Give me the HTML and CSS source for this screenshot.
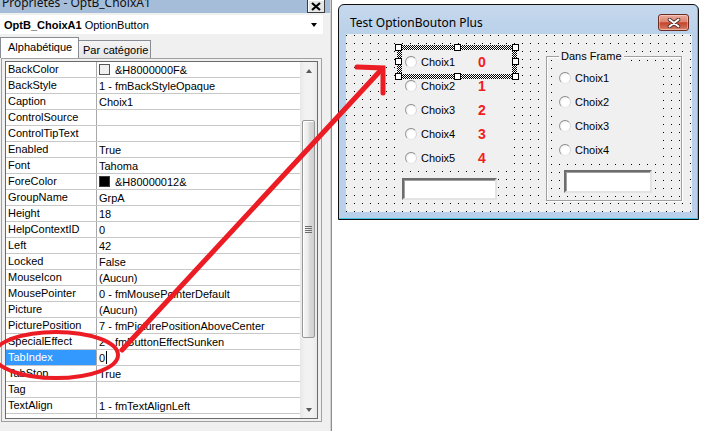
FILE: index.html
```html
<!DOCTYPE html>
<html lang="fr">
<head>
<meta charset="utf-8">
<title>Propriétés</title>
<link rel="stylesheet" href="styles.css">
</head>
<body>
<div class="screen">
  <section class="props">
    <header class="props-title">
      <span class="props-caption">Propriétés - OptB_ChoixA1</span>
      <span class="props-close"><svg width="10" height="9" viewBox="0 0 10 9"><path d="M1 1 L9 8 M9 1 L1 8" stroke="#000" stroke-width="2.2" fill="none"/></svg></span>
    </header>
    <div class="combo"><span class="combo-text"><b>OptB_ChoixA1</b> OptionButton</span><span class="combo-arrow"></span></div>
    <div class="tabs"><span class="tab tab-active">Alphabétique</span><span class="tab">Par catégorie</span></div>
    <div class="grid-outer">
      <div class="grid-inner">
        <div class="grid">
          <div class="row"><span class="name">BackColor</span><span class="val"><i class="swatch swatch-light"></i>&amp;H8000000F&amp;</span></div>
          <div class="row"><span class="name">BackStyle</span><span class="val">1 - fmBackStyleOpaque</span></div>
          <div class="row"><span class="name">Caption</span><span class="val">Choix1</span></div>
          <div class="row"><span class="name">ControlSource</span><span class="val"></span></div>
          <div class="row"><span class="name">ControlTipText</span><span class="val"></span></div>
          <div class="row"><span class="name">Enabled</span><span class="val">True</span></div>
          <div class="row"><span class="name">Font</span><span class="val">Tahoma</span></div>
          <div class="row"><span class="name">ForeColor</span><span class="val"><i class="swatch swatch-dark"></i>&amp;H80000012&amp;</span></div>
          <div class="row"><span class="name">GroupName</span><span class="val">GrpA</span></div>
          <div class="row"><span class="name">Height</span><span class="val">18</span></div>
          <div class="row"><span class="name">HelpContextID</span><span class="val">0</span></div>
          <div class="row"><span class="name">Left</span><span class="val">42</span></div>
          <div class="row"><span class="name">Locked</span><span class="val">False</span></div>
          <div class="row"><span class="name">MouseIcon</span><span class="val">(Aucun)</span></div>
          <div class="row"><span class="name">MousePointer</span><span class="val">0 - fmMousePointerDefault</span></div>
          <div class="row"><span class="name">Picture</span><span class="val">(Aucun)</span></div>
          <div class="row"><span class="name">PicturePosition</span><span class="val">7 - fmPicturePositionAboveCenter</span></div>
          <div class="row"><span class="name">SpecialEffect</span><span class="val">2 - fmButtonEffectSunken</span></div>
          <div class="row row-sel"><span class="name">TabIndex</span><span class="val">0<i class="caret"></i></span></div>
          <div class="row"><span class="name">TabStop</span><span class="val">True</span></div>
          <div class="row"><span class="name">Tag</span><span class="val"></span></div>
          <div class="row"><span class="name">TextAlign</span><span class="val">1 - fmTextAlignLeft</span></div>
          <div class="row"><span class="name"></span><span class="val"></span></div>
        </div>
        <div class="vscroll">
          <div class="sb-btn"><i class="sb-up"></i></div>
          <div class="sb-track"><div class="sb-thumb"><i class="grip"></i></div></div>
          <div class="sb-btn"><i class="sb-down"></i></div>
        </div>
      </div>
    </div>
  </section>

  <div class="desk">
    <div class="win">
      <div class="win-title">
        <span class="win-caption">Test OptionBouton Plus</span>
        <span class="win-close"><svg width="14" height="10" viewBox="0 0 14 10"><path d="M2.5 1.5 L11.5 8.5 M11.5 1.5 L2.5 8.5" stroke="#4a2a26" stroke-width="3.6" stroke-linecap="round" fill="none"/><path d="M2.5 1.5 L11.5 8.5 M11.5 1.5 L2.5 8.5" stroke="#fff" stroke-width="2" stroke-linecap="round" fill="none"/></svg></span>
      </div>
      <div class="client">
        <div class="col">
          <div class="opt">
            <span class="sel"></span>
            <i class="h h-tl"></i><i class="h h-tm"></i><i class="h h-tr"></i><i class="h h-ml"></i><i class="h h-mr"></i><i class="h h-bl"></i><i class="h h-bm"></i><i class="h h-br"></i>
            <i class="radio"></i><span class="opt-text">Choix1</span><span class="num">0</span>
          </div>
          <div class="opt"><i class="radio"></i><span class="opt-text">Choix2</span><span class="num">1</span></div>
          <div class="opt"><i class="radio"></i><span class="opt-text">Choix3</span><span class="num">2</span></div>
          <div class="opt"><i class="radio"></i><span class="opt-text">Choix4</span><span class="num">3</span></div>
          <div class="opt"><i class="radio"></i><span class="opt-text">Choix5</span><span class="num">4</span></div>
          <div class="textbox"></div>
        </div>
        <div class="frame">
          <span class="frame-label">Dans Frame</span>
          <div class="fopt"><i class="radio"></i><span>Choix1</span></div>
          <div class="fopt"><i class="radio"></i><span>Choix2</span></div>
          <div class="fopt"><i class="radio"></i><span>Choix3</span></div>
          <div class="fopt"><i class="radio"></i><span>Choix4</span></div>
          <div class="textbox textbox-frame"></div>
        </div>
      </div>
    </div>
  </div>

  <svg class="annot" width="715" height="431" viewBox="0 0 715 431">
    <ellipse cx="56" cy="355" rx="62" ry="23" fill="none" stroke="#ec1c24" stroke-width="4"/>
    <line x1="122" y1="350" x2="381" y2="70" stroke="#ec1c24" stroke-width="5" stroke-linecap="round"/>
    <polyline points="357,67 383,68 383,93" fill="none" stroke="#ec1c24" stroke-width="5" stroke-linecap="round" stroke-linejoin="miter"/>
  </svg>
</div>
</body>
</html>
```

FILE: styles.css
```css
* { box-sizing: border-box; margin: 0; padding: 0; }
html, body { width: 715px; height: 431px; overflow: hidden; background: #fff; }
body { font-family: "Liberation Sans", Arial, sans-serif; font-size: 11px; color: #000; }

.screen { position: relative; display: flex; width: 715px; height: 431px; }

/* ---------- properties panel ---------- */
.props {
  width: 332px; height: 431px; background: #f0f0f0;
  border-right: 1px solid #8e8e8e; box-shadow: inset -1px 0 0 #d2d2d2;
  display: flex; flex-direction: column;
}
.props-title {
  height: 13px; flex: none; background: #a5bdd8; display: flex;
  justify-content: space-between; align-items: flex-start; overflow: hidden;
  margin-right: 1px;
}
.props-caption {
  font-family: "Noto Sans", "Liberation Sans", sans-serif; font-size: 12px; line-height: 12px;
  margin-top: -3px; padding-left: 2px; color: #101010; white-space: nowrap;
}
.props-close {
  width: 18px; height: 14px; margin-right: 5px; margin-top: -1px;
  background: #e6e6e6; border: 1px solid #3c3c3c; box-shadow: inset 1px 1px 0 #fff;
  display: flex; align-items: center; justify-content: center;
}
.combo {
  height: 19px; margin: 2px 8px 0 0; background: #fff; display: flex; align-items: center;
  padding-left: 4px; flex: none;
}
.combo-text { white-space: nowrap; }
.combo-arrow {
  margin-left: auto; margin-right: 6px; width: 0; height: 0;
  border-top: 4px solid #000; border-left: 3.5px solid transparent; border-right: 3.5px solid transparent;
}
.tabs { height: 21px; margin-top: 3px; display: flex; align-items: flex-end; flex: none; }
.tab {
  height: 18px; width: 72px; border: 1px solid #898c95; border-left: none; border-bottom: none;
  background: linear-gradient(#f4f4f4, #e6e6e6); padding-left: 4px; line-height: 18px; white-space: nowrap;
}
.tab-active {
  height: 21px; width: 79px; border-left: 1px solid #898c95; background: #fff; padding-left: 7px;
  line-height: 19px;
}
.grid-outer {
  margin-left: 1px; width: 321px; height: 364px; border: 1px solid #a0a0a0;
  padding: 2px 3px; flex: none;
}
.grid-inner { height: 358px; border: 1px solid #6a6a6a; display: flex; }
.grid { width: 294px; height: 356px; overflow: hidden; background: #fff; }
.row { display: flex; height: 16px; border-bottom: 1px solid #c8c8c8; }
.name {
  width: 91px; flex: none; border-right: 1px solid #a8a8a8; padding-left: 2px; line-height: 15px;
  white-space: nowrap; overflow: hidden;
}
.val { flex: 1; padding-left: 2px; display: flex; align-items: center; white-space: nowrap; height: 15px; }
.row-sel .name { background: #3399ff; color: #fff; }
.caret { display: inline-block; width: 1px; height: 13px; background: #000; margin-left: 1px; }
.swatch { display: inline-block; width: 11px; height: 11px; border: 1px solid #3a3a3a; margin-right: 5px; }
.swatch-light { background: #f0f0f0; border-color: #555; }
.swatch-dark { background: #000; }

.vscroll {
  width: 17px; height: 356px; display: flex; flex-direction: column;
  background: linear-gradient(to right, #e8e8e8, #f2f2f2 30%, #f2f2f2 70%, #e9e9e9);
}
.sb-btn { height: 17px; flex: none; display: flex; align-items: center; justify-content: center; }
.sb-up { width: 0; height: 0; border-bottom: 4px solid #5a5a5a; border-left: 3.5px solid transparent; border-right: 3.5px solid transparent; }
.sb-down { width: 0; height: 0; border-top: 4px solid #5a5a5a; border-left: 3.5px solid transparent; border-right: 3.5px solid transparent; }
.sb-track { flex: 1; }
.sb-thumb {
  margin: 41px 2px 0 2px; height: 218px; border: 1px solid #979797; border-radius: 2px;
  background: linear-gradient(to right, #f6f6f6, #ececec 45%, #dcdcdc 55%, #d0d0d0);
  box-shadow: inset 1px 1px 0 #fff;
  display: flex; align-items: center; justify-content: center;
}
.grip {
  width: 7px; height: 7px;
  background: repeating-linear-gradient(#6e6e6e 0 1px, transparent 1px 2px);
}

/* ---------- desktop / form ---------- */
.desk { flex: 1; padding: 4px 0 0 6px; background: #fff; }
.win {
  width: 361px; height: 216px; border: 1px solid #101010; border-radius: 6px 6px 0 0;
  background: linear-gradient(#c6d8ed, #b9d1ea 30px);
  box-shadow: inset -1px -1px 0 #46c6e6;
  padding: 0 6px 6px 7px; display: flex; flex-direction: column;
}
.win-title { height: 29px; flex: none; display: flex; align-items: center; padding: 6px 3px 0 4px; }
.win-caption { font-family: "Noto Sans", "Liberation Sans", sans-serif; font-size: 12px; color: #000; white-space: nowrap; }
.win-close {
  margin-left: auto; width: 31px; height: 17px; border: 1px solid #6b2c22; border-radius: 3px;
  background: linear-gradient(#e9ab9d, #dc8672 45%, #c6442c 52%, #cf6a52 85%, #e2947c);
  box-shadow: inset 0 0 0 1px rgba(255,255,255,0.35);
  display: flex; align-items: center; justify-content: center;
}
.client {
  width: 346px; height: 178px; background-color: #f0f0f0; display: flex; align-items: flex-start;
  background-image: conic-gradient(at 1px 1px, transparent 75%, #000 0);
  background-size: 8px 8px; background-position: 0 1px;
}
.col { width: 200px; padding: 16px 0 0 56px; }
.opt {
  position: relative; width: 110px; height: 24px; background: #f0f0f0; display: flex; align-items: center;
}
.radio {
  display: inline-block; width: 12px; height: 12px; border-radius: 50%; flex: none;
  border: 1px solid; border-color: #8a8a8a #d8d8d8 #e8e8e8 #9a9a9a;
  background: radial-gradient(circle at 60% 60%, #fff 0 45%, #ececec 80%);
}
.opt .radio { margin-left: 3px; }
.opt-text { width: 57px; margin-left: 4px; }
.num { font-weight: bold; font-size: 14px; color: #f21c1c; }
.sel {
  position: absolute; left: -5px; top: -5px; right: -5px; bottom: -5px; z-index: 2;
  border: 5px solid transparent;
  background: repeating-conic-gradient(#000 0 25%, #fff 0 50%) 0 0 / 2px 2px border-box;
  -webkit-mask: linear-gradient(#000 0 0) padding-box, linear-gradient(#000 0 0) border-box;
  -webkit-mask-composite: xor;
  mask: linear-gradient(#000 0 0) padding-box exclude, linear-gradient(#000 0 0) border-box;
}
.h { position: absolute; z-index: 3; width: 7px; height: 7px; background: #fff; border: 1px solid #000; }
.h-tl, .h-tm, .h-tr { top: -6px; }
.h-ml, .h-mr { top: 8px; }
.h-bl, .h-bm, .h-br { bottom: -6px; }
.h-tl, .h-ml, .h-bl { left: -7px; }
.h-tm, .h-bm { left: 52px; }
.h-tr, .h-mr, .h-br { right: -7px; }
.textbox {
  width: 95px; height: 22px; margin-top: 8px; background: #fff;
  border: 2px solid; border-color: #6d6d6d #e3e3e3 #e3e3e3 #6d6d6d;
  box-shadow: inset 1px 1px 0 #a0a0a0;
}
.frame {
  position: relative; width: 136px; height: 145px; margin-top: 22px;
  border: 1px solid #a0a0a0; box-shadow: inset 1px 1px 0 #fff, 1px 1px 0 #fff;
  background-color: #f0f0f0;
  background-image: conic-gradient(at 1px 1px, transparent 75%, #000 0);
  background-size: 8px 8px; background-position: 4px 3px;
  padding: 9px 0 0 9px;
}
.frame-label { position: absolute; left: 12px; top: -7px; background: #f0f0f0; padding: 0 2px; line-height: 13px; }
.fopt { width: 100px; height: 24px; background: #f0f0f0; display: flex; align-items: center; }
.fopt .radio { margin-left: 3px; }
.fopt span { margin-left: 4px; }
.textbox-frame { width: 88px; height: 23px; margin-left: 8px; }

.annot { position: absolute; left: 0; top: 0; pointer-events: none; }
```
